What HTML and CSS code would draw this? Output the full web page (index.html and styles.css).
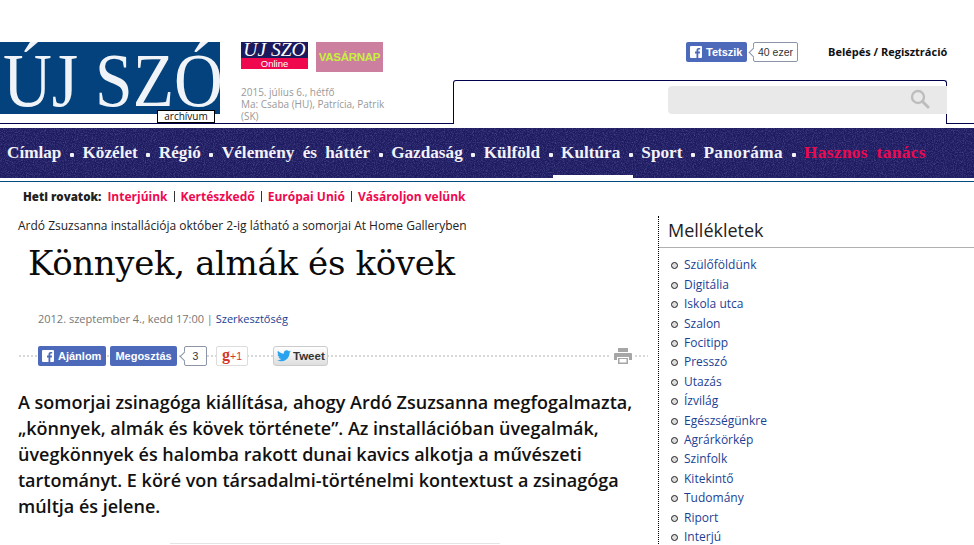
FILE: index.html
```html
<!DOCTYPE html>
<html lang="hu">
<head>
<meta charset="utf-8">
<title>Könnyek, almák és kövek</title>
<link rel="stylesheet" href="styles.css">
</head>
<body>
<header class="top">
  <div class="logo-wrap">
    <div class="logo-clip"><div class="logo">ÚJ SZÓ</div></div>
    <div class="archive">archívum</div>
  </div>
  <div class="mid">
    <div class="sublogos">
      <div class="online"><div class="online-top">ÚJ SZÓ</div><div class="online-bot">Online</div></div>
      <div class="vasarnap">VASÁRNAP</div>
    </div>
    <p class="date">2015. július 6., hétfő<br>Ma: Csaba (HU), Patrícia, Patrik (SK)</p>
  </div>
  <div class="right">
    <div class="right-top">
      <div class="fb-btn fb-like"><svg class="fb-ico" viewBox="0 0 12 12"><rect width="12" height="12" rx="1" fill="#fff"/><path d="M8.3 12V7.4h1.5l.2-1.8H8.3V4.5c0-.5.2-.9.9-.9h1V2c-.2 0-.8-.1-1.400-.1-1.400 0-2.300.8-2.300 2.400v1.300H5v1.800h1.500V12z" fill="#4c69ba"/></svg>Tetszik</div>
      <div class="count count-like">40 ezer</div>
      <div class="login">Belépés / Regisztráció</div>
    </div>
    <div class="tab">
      <div class="search"><svg class="search-ico" viewBox="0 0 20 20"><circle cx="8" cy="8" r="6" fill="none" stroke="#bdbdbd" stroke-width="2.400"/><path d="M12.500 12.500L18 18" stroke="#bdbdbd" stroke-width="3" stroke-linecap="round"/></svg></div>
    </div>
  </div>
</header>
<nav class="nav">
  <svg class="noise" aria-hidden="true"><filter id="n"><feTurbulence type="fractalNoise" baseFrequency="0.9" numOctaves="2" seed="4"/><feColorMatrix values="0 0 0 0 0.14  0 0 0 0 0.14  0 0 0 0 0.42  1.200 0 0 0 -0.500"/></filter><rect width="100%" height="100%" filter="url(#n)"/></svg>
  <a class="nav-item">Címlap</a><i class="dot"></i>
  <a class="nav-item">Közélet</a><i class="dot"></i>
  <a class="nav-item">Régió</a><i class="dot"></i>
  <a class="nav-item">Vélemény és háttér</a><i class="dot"></i>
  <a class="nav-item">Gazdaság</a><i class="dot"></i>
  <a class="nav-item">Külföld</a><i class="dot"></i>
  <a class="nav-item active">Kultúra</a><i class="dot"></i>
  <a class="nav-item">Sport</a><i class="dot"></i>
  <a class="nav-item wide">Panoráma</a><i class="dot"></i>
  <a class="nav-item wide hot">Hasznos tanács</a>
</nav>
<div class="weekly">
  <b class="weekly-label">Heti rovatok:</b>
  <a>Interjúink</a><span class="sep"></span><a>Kertészkedő</a><span class="sep"></span><a>Európai Unió</a><span class="sep"></span><a>Vásároljon velünk</a>
</div>
<div class="content">
  <main class="article">
    <p class="kicker">Ardó Zsuzsanna installációja október 2-ig látható a somorjai At Home Galleryben</p>
    <h1 class="title">Könnyek, almák és kövek</h1>
    <p class="meta">2012. szeptember 4., kedd 17:00 | <a>Szerkesztőség</a></p>
    <div class="share">
      <div class="fb-btn fb-rec"><svg class="fb-ico" viewBox="0 0 12 12"><rect width="12" height="12" rx="1" fill="#fff"/><path d="M8.3 12V7.4h1.5l.2-1.8H8.3V4.5c0-.5.2-.9.9-.9h1V2c-.2 0-.8-.1-1.400-.1-1.400 0-2.300.8-2.300 2.400v1.300H5v1.800h1.500V12z" fill="#4c69ba"/></svg>Ajánlom</div>
      <div class="fb-btn fb-share">Megosztás</div>
      <div class="count count-share">3</div>
      <div class="gplus"><span class="g">g</span>+1</div>
      <div class="tweet"><svg class="tw-ico" viewBox="0 0 24 20"><path d="M24 2.400c-.9.400-1.800.700-2.800.800 1-.6 1.800-1.600 2.200-2.700-1 .6-2 1-3.100 1.200C19.300.7 18 0 16.600 0c-2.700 0-4.900 2.200-4.900 4.900 0 .4 0 .8.100 1.100C7.700 5.800 4.100 3.900 1.700.9c-.4.700-.7 1.600-.7 2.500 0 1.700.9 3.200 2.200 4.100-.8 0-1.600-.2-2.200-.6v.1c0 2.400 1.700 4.400 3.900 4.800-.4.100-.8.200-1.300.2-.3 0-.6 0-.9-.1.600 2 2.400 3.400 4.600 3.400-1.700 1.300-3.800 2.100-6.100 2.100-.4 0-.8 0-1.200-.1C2.200 18.200 4.800 19 7.500 19c9.100 0 14-7.500 14-14v-.6c1-.7 1.800-1.500 2.500-2z" fill="#2aa3ef"/></svg>Tweet</div>
      <svg class="printer" viewBox="0 0 18 16"><path d="M4 0h10v4H4z" fill="#a6a6a6"/><path d="M1 5h16a1 1 0 0 1 1 1v6h-3V9H3v3H0V6a1 1 0 0 1 1-1z" fill="#a6a6a6"/><path d="M4 10h10v6H4z" fill="#a6a6a6"/><path d="M5.500 11h7v3.500h-7z" fill="#fff"/></svg>
    </div>
    <p class="lead">A somorjai zsinagóga kiállítása, ahogy Ardó Zsuzsanna megfogalmazta, „könnyek, almák és kövek története”. Az installációban üvegalmák, üvegkönnyek és halomba rakott dunai kavics alkotja a művészeti tartományt. E köré von társadalmi-történelmi kontextust a zsinagóga múltja és jelene.</p>
    <div class="figure-edge"></div>
  </main>
  <aside class="side">
    <h2 class="side-title">Mellékletek</h2>
    <ul class="side-list">
      <li>Szülőföldünk</li>
      <li>Digitália</li>
      <li>Iskola utca</li>
      <li>Szalon</li>
      <li>Focitipp</li>
      <li>Presszó</li>
      <li>Utazás</li>
      <li>Ízvilág</li>
      <li>Egészségünkre</li>
      <li>Agrárkörkép</li>
      <li>Szinfolk</li>
      <li>Kitekintő</li>
      <li>Tudomány</li>
      <li>Riport</li>
      <li>Interjú</li>
    </ul>
  </aside>
</div>
</body>
</html>
```
FILE: styles.css
```css
* { box-sizing: border-box; }
html, body { height: 545px; overflow: hidden; }
body { margin: 0; background: #fff; color: #111; font-family: "Open Sans", sans-serif; }
p, h1, h2, ul { margin: 0; padding: 0; }

.top { display: flex; height: 128px; padding-top: 42px; position: relative; }
.top::after { content: ""; position: absolute; left: 0; right: 0; top: 123px; height: 1px; background: #00004d; }
.logo-wrap { position: relative; width: 220px; height: 72px; background: #03427c; flex: none; }
.logo-clip { height: 72px; overflow: hidden; }
.logo { font-family: "Liberation Serif", serif; color: #f0f4f8; font-size: 76px; line-height: 76px; white-space: nowrap; margin-left: 3px; transform: scaleX(.89); transform-origin: left top; }
.archive { position: absolute; left: 157px; top: 68px; width: 58px; height: 13px; background: #fff; border: 1px solid #000; font-size: 10px; line-height: 11px; text-align: center; color: #111; }

.mid { width: 148px; margin-left: 21px; flex: none; }
.sublogos { display: flex; gap: 8px; align-items: flex-start; height: 39px; }
.online { width: 67px; height: 27px; overflow: hidden; }
.online-top { height: 16px; background: #1b1a5e; color: #fff; font: italic 19.500px/16px "Liberation Serif", serif; text-align: center; white-space: nowrap; }
.online-bot { height: 11px; background: #f0084f; color: #fff; font: 9.500px/11px "Liberation Sans", sans-serif; text-align: center; }
.vasarnap { width: 67px; height: 30px; background: #cd7f9f; color: #c6f23c; font: bold 11.500px/30px "Liberation Sans", sans-serif; text-align: center; letter-spacing: -.3px; }
.date { font-size: 10px; line-height: 12px; color: #999; margin-top: 5px; }

.right { flex: 1; display: flex; flex-direction: column; margin-left: 64px; min-width: 0; }
.right-top { display: flex; height: 38px; padding-left: 233px; align-items: flex-start; }
.fb-btn { background: #4c69ba; color: #fff; font: bold 11px/20px "Liberation Sans", sans-serif; border-radius: 2px; height: 20px; display: flex; align-items: center; }
.fb-ico { width: 12px; height: 12px; margin: 0 4px; flex: none; }
.fb-like { width: 61px; }
.count { position: relative; background: #fff; border: 1px solid #8c95a8; border-radius: 2px; height: 20px; color: #333; font: 10.500px/18px "Liberation Sans", sans-serif; text-align: center; margin-left: 6px; }
.count::before { content: ""; position: absolute; left: -4px; top: 6px; width: 6px; height: 6px; background: #fff; border-left: 1px solid #8c95a8; border-bottom: 1px solid #8c95a8; transform: rotate(45deg); }
.count-like { width: 45px; }
.login { font-size: 11px; font-weight: 700; line-height: 20px; margin-left: 30px; white-space: nowrap; color: #111; }
.tab { width: 494px; height: 44px; border: 1px solid #00004d; border-bottom: 0; border-radius: 3px 3px 0 0; background: #fff; position: relative; z-index: 1; padding-top: 5px; display: flex; justify-content: flex-end; }
.search { width: 279px; height: 28px; margin-right: -1px; background: #e9e9e9; border-radius: 4px 0 0 4px; position: relative; }
.search-ico { position: absolute; right: 17px; top: 3px; width: 20px; height: 20px; }

.nav { position: relative; height: 50px; background: #1e1b60; display: flex; align-items: flex-start; padding: 14px 0 0 7px; overflow: hidden; }
.noise { position: absolute; inset: 0; width: 100%; height: 100%; }
.nav-item { position: relative; font: bold 17.200px/22px "Liberation Serif", serif; word-spacing: 4px; color: #f2f2f8; white-space: nowrap; }
.nav-item.wide { letter-spacing: .4px; }
.nav-item.hot { color: #f0084f; }
.nav-item.active::after { content: ""; position: absolute; left: -8px; right: -13px; top: 33px; height: 3px; background: #fff; }
.dot { position: relative; width: 4px; height: 4px; border-radius: 1px; background: #f2f2f8; margin: 11px 8.500px 0; flex: none; }

.weekly { margin-top: 3px; border-top: 1px solid #004a80; height: 35px; padding: 6px 0 0 23px; font-size: 12px; line-height: 17px; font-weight: 700; display: flex; white-space: nowrap; }
.weekly-label { margin-right: 6px; color: #222; font-size: 11.500px; }
.weekly a { color: #f0084f; }
.sep { width: 1px; height: 11px; background: #333; margin: 3px 6px 0; }

.content { display: flex; }
.article { width: 658px; flex: none; padding: 1px 0 0 18px; }
.kicker { font-size: 12px; line-height: 17px; color: #222; }
.title { font: 400 34px/46px "DejaVu Serif", serif; letter-spacing: -.35px; margin: 6px 0 0 10px; color: #0a0a0a; white-space: nowrap; }
.meta { font-size: 11px; line-height: 14px; color: #777; margin: 26px 0 0 20px; }
.meta a { color: #1c3f94; }
.share { position: relative; display: flex; align-items: flex-start; height: 20px; margin: 20px 10px 0 0; padding-left: 20px; background: radial-gradient(circle, #aaa .6px, transparent .8px) 0 9px / 4px 2px repeat-x; }
.fb-rec { width: 68px; margin-right: 4px; }
.fb-share { width: 67px; justify-content: center; }
.count-share { width: 23px; color: #333; margin-left: 7px; }
.gplus { width: 32px; height: 20px; margin-left: 9px; border: 1px solid #ddd; background: #fff; border-radius: 2px; color: #d2392b; font: 10.500px/18px "Liberation Sans", sans-serif; text-align: center; }
.g { font: bold 16px/14px "Liberation Serif", serif; }
.tweet { display: flex; align-items: center; width: 55px; height: 20px; margin-left: 25px; border: 1px solid #ccc; border-radius: 3px; background: linear-gradient(#fff, #dedede); color: #333; font: bold 11.500px/18px "Liberation Sans", sans-serif; }
.tw-ico { width: 14px; height: 12px; margin: 0 2px 0 3px; flex: none; }
.printer { position: absolute; left: 596px; top: 2px; width: 18px; height: 16px; background: #fff; box-shadow: 0 0 0 3px #fff; }
.lead { font-size: 18px; line-height: 26px; font-weight: 600; margin-top: 23px; width: 625px; color: #111; }
.figure-edge { width: 330px; height: 1px; background: #e4e4e4; margin: 24px 0 0 152px; }

.side { flex: 1; border-left: 1px dotted #000; height: 330px; }
.side-title { font-size: 18px; font-weight: 400; line-height: 28px; padding: 0 0 3px 9px; height: 32px; border-bottom: 1px solid #b0b0b0; color: #222; }
.side-list { list-style: none; padding: 7.400px 0 0 25px; }
.side-list li { position: relative; font-size: 12px; line-height: 19.400px; color: #1c3f94; white-space: nowrap; }
.side-list li::before { content: ""; position: absolute; left: -13px; top: 7px; width: 5px; height: 5px; border: 1px solid #222; border-radius: 50%; background: #ddd; }
```
